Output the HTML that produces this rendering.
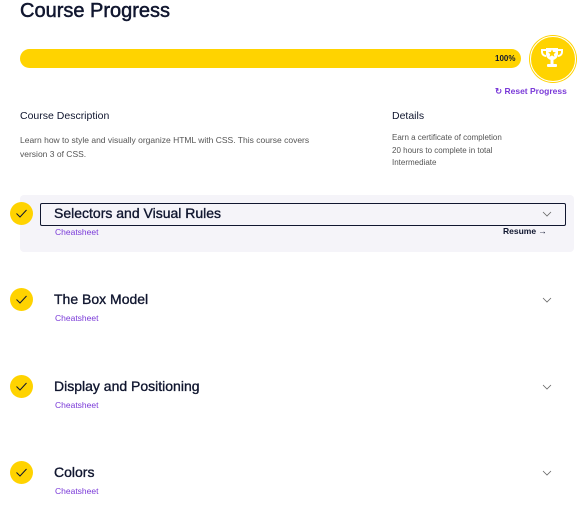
<html><head><style>
body{margin:0;width:582px;height:511px;background:#fff;font-family:"Liberation Sans",sans-serif;color:#10162f;position:relative;overflow:hidden}
.a{position:absolute;white-space:nowrap}
.chk{position:absolute;width:23px;height:23px;border-radius:50%;background:#ffd300}
.chk svg{position:absolute;left:5px;top:6px}
.t{font-size:14px;font-weight:normal;-webkit-text-stroke:0.35px #10162f}
.cs{font-size:8.5px;color:#7a3ad8}
.sm{font-size:8.5px;color:#555}
</style></head><body>
<div class="a" style="left:20px;top:0px;font-size:20px;-webkit-text-stroke:0.5px #10162f">Course Progress</div>
<div class="a" style="left:20px;top:49px;width:501px;height:19px;border-radius:10px;background:#ffd300"></div>
<div class="a" style="left:495px;top:54px;font-size:8px;font-weight:bold">100%</div>
<div class="a" style="left:530px;top:36px;width:44px;height:44px;border-radius:50%;background:#ffd300;border:1px solid #fff;box-shadow:0 0 0 1px #ffd300"></div>
<svg class="a" style="left:538px;top:44px" width="28" height="28" viewBox="0 0 28 28"><path d="M8 4h12v6a6 6 0 0 1-12 0z" fill="#fff"/><path d="M8 6H4v2a4 4 0 0 0 4 4M20 6h4v2a4 4 0 0 1-4 4" stroke="#fff" stroke-width="2" fill="none"/><rect x="12.5" y="15" width="3" height="5" fill="#fff"/><rect x="9" y="20" width="10" height="3" rx="1" fill="#fff"/><path d="M14 5.5l1.2 2.5 2.6.3-2 1.8.6 2.6-2.4-1.3-2.4 1.3.6-2.6-2-1.8 2.6-.3z" fill="#ffd300"/></svg>
<div class="a" style="left:495px;top:86px;font-size:8.5px;color:#7a3ad8;font-weight:bold">&#8635; Reset Progress</div>
<div class="a" style="left:20px;top:110px;font-size:10.5px">Course Description</div>
<div class="a sm" style="left:20px;top:133px;line-height:14px">Learn how to style and visually organize HTML with CSS. This course covers<br>version 3 of CSS.</div>
<div class="a" style="left:392px;top:110px;font-size:10.5px">Details</div>
<div class="a sm" style="left:392px;top:132px;line-height:12.5px;font-size:8px">Earn a certificate of completion<br>20 hours to complete in total<br>Intermediate</div>

<div class="a" style="left:20px;top:195px;width:554px;height:57px;background:#f5f4f9;border-radius:4px"></div>
<div class="a" style="left:40px;top:203px;width:524px;height:21px;border:1px solid #10162f;border-radius:2px;background:#f5f4f9"></div>
<div class="a" style="left:503px;top:226px;font-size:8.5px;font-weight:bold">Resume &rarr;</div>

<div class="chk" style="left:10px;top:202px"><svg width="13" height="11"><path d="M1.5 5.5l3.5 3.5 6.5-7" stroke="#10162f" stroke-width="1" fill="none"/></svg></div>
<div class="a t" style="left:54px;top:205px">Selectors and Visual Rules</div>
<div class="a cs" style="left:55px;top:227px">Cheatsheet</div>
<svg class="a" style="left:542px;top:211px" width="10" height="6"><path d="M1 1l4 4 4-4" stroke="#666" stroke-width=".8" fill="none"/></svg>

<div class="chk" style="left:10px;top:288px"><svg width="13" height="11"><path d="M1.5 5.5l3.5 3.5 6.5-7" stroke="#10162f" stroke-width="1" fill="none"/></svg></div>
<div class="a t" style="left:54px;top:291px">The Box Model</div>
<div class="a cs" style="left:55px;top:313px">Cheatsheet</div>
<svg class="a" style="left:542px;top:297px" width="10" height="6"><path d="M1 1l4 4 4-4" stroke="#666" stroke-width=".8" fill="none"/></svg>

<div class="chk" style="left:10px;top:375px"><svg width="13" height="11"><path d="M1.5 5.5l3.5 3.5 6.5-7" stroke="#10162f" stroke-width="1" fill="none"/></svg></div>
<div class="a t" style="left:54px;top:378px">Display and Positioning</div>
<div class="a cs" style="left:55px;top:400px">Cheatsheet</div>
<svg class="a" style="left:542px;top:384px" width="10" height="6"><path d="M1 1l4 4 4-4" stroke="#666" stroke-width=".8" fill="none"/></svg>

<div class="chk" style="left:10px;top:461px"><svg width="13" height="11"><path d="M1.5 5.5l3.5 3.5 6.5-7" stroke="#10162f" stroke-width="1" fill="none"/></svg></div>
<div class="a t" style="left:54px;top:464px">Colors</div>
<div class="a cs" style="left:55px;top:486px">Cheatsheet</div>
<svg class="a" style="left:542px;top:470px" width="10" height="6"><path d="M1 1l4 4 4-4" stroke="#666" stroke-width=".8" fill="none"/></svg>
</body></html>
